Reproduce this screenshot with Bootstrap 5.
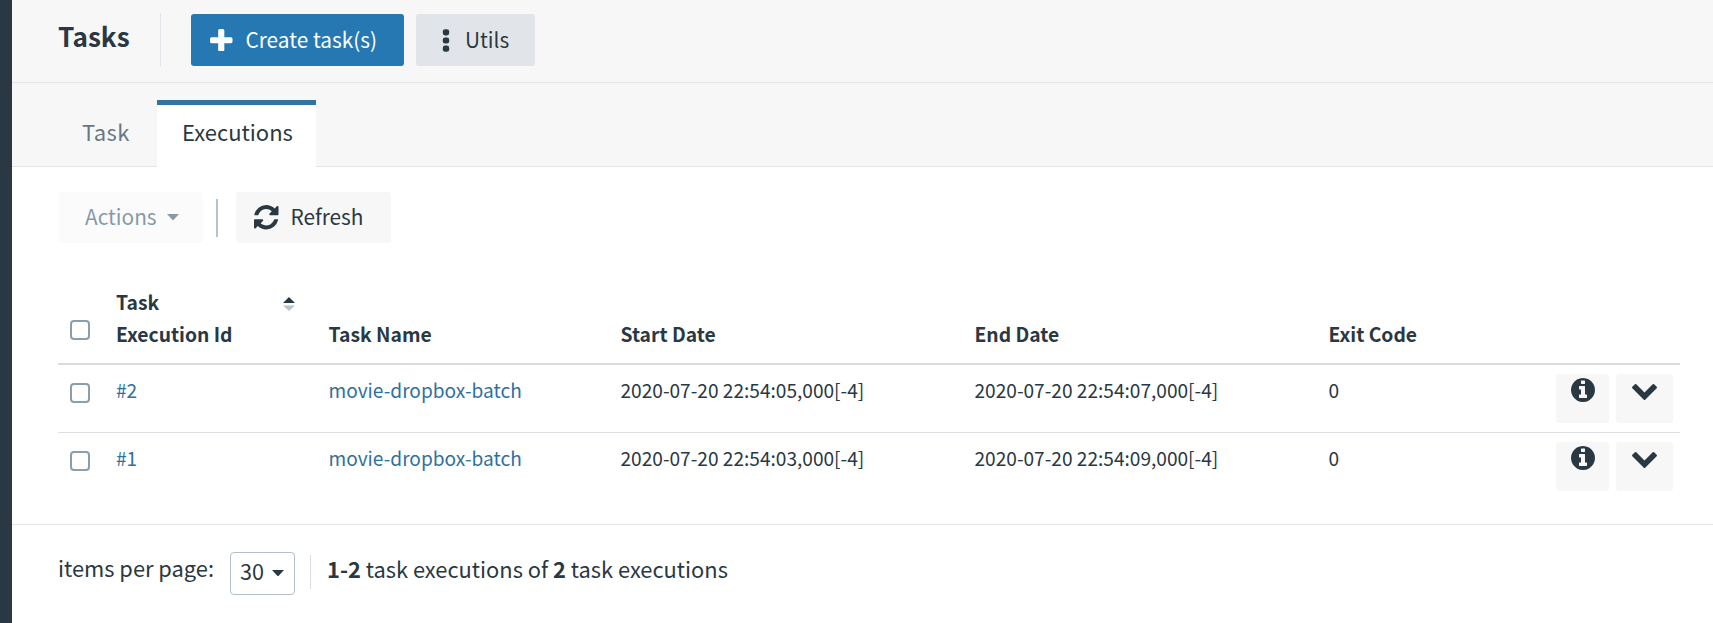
<!DOCTYPE html>
<html lang="en">
<head>
<meta charset="utf-8">
<title>Tasks</title>
<link rel="stylesheet" href="https://cdn.jsdelivr.net/npm/bootstrap@5.3.0/dist/css/bootstrap.min.css">
<script src="https://cdn.jsdelivr.net/npm/bootstrap@5.3.0/dist/js/bootstrap.bundle.min.js"></script>
<style>
  :root { --ink: #293842; --line: #e1e5e9; --blue: #2578b1; --soft: #f7f7f7; }
  body { font-family: "Noto Sans CJK SC", sans-serif; color: var(--ink); font-size: 21.85px; line-height: 32px; background: #fff; }
  svg { fill: currentColor; display: block; flex: none; }
  .side-rail { width: 12px; background: var(--ink); }
  .page-head { height: 83px; padding: 13px 0 0 46px; background: var(--soft); border-bottom: 1px solid var(--line); }
  .page-title { font-size: 26.2px; font-weight: 700; line-height: 32px; width: 102px; margin: 7px 0 0; }
  .head-rule { width: 1px; height: 53px; background: var(--line); margin-right: 30px; }
  .btn { display: flex; align-items: center; font-size: 20.8px; line-height: 30px; border: 0; border-radius: 3px; padding: 0; height: 52px; color: var(--ink); background: var(--soft); white-space: nowrap; }
  .btn span { padding-bottom: 3px; }
  .page-head .btn { margin-top: 1px; }
  .btn-create { width: 213px; padding-left: 19px; gap: 13px; background: var(--blue); color: #fff; }
  .btn-utils { width: 119px; padding-left: 26px; gap: 15px; margin-left: 12px; background: var(--line); }
  .tab-strip { height: 84px; padding: 17px 0 0 46px; background: var(--soft); border-bottom: 1px solid var(--line); }
  .nav-tabs { border: 0; }
  .nav-tabs .nav-link { height: 67px; border: 0; border-top: 5px solid transparent; border-radius: 0; color: #687782; font-size: 22px; line-height: 32px; padding: 10px 24px 0; margin: 0; }
  .nav-tabs .tab-task { width: 99px; letter-spacing: .4px; }
  .nav-tabs .nav-link.active { color: var(--ink); background: #fff; border-top-color: #32749f; padding: 10px 0 0 25px; width: 159px; }
  .tools { padding: 25px 0 0 47px; }
  .btn-actions { width: 144px; height: 51px; padding-left: 26px; gap: 10px; background: #fbfbfb; color: #8799a5; }
  .tool-rule { width: 1.5px; height: 38px; background: #b4c3cf; margin: 0 18.5px 0 13px; }
  .btn-refresh { width: 155px; height: 51px; padding-left: 18px; gap: 12px; }
  .runs { table-layout: fixed; width: 1622px; margin: 43px 0 0 46px; font-size: 19.1px; line-height: 32px; color: var(--ink); }
  .runs > :not(caption) > * > * { padding: 9px 0 0; border: 0; box-shadow: none; vertical-align: top; background: none; color: var(--ink); }
  .runs > thead > tr > th { padding: 0 0 12.5px; vertical-align: bottom; font-size: 19.3px; border-bottom: 2px solid #d6dbdf; }
  .runs > tbody > tr > td { height: 68px; }
  .runs > tbody > tr:first-child > td { height: 69px; border-bottom: 1px solid #dce0e4; }
  .runs a, .runs a:hover { color: #2f719e; text-decoration: none; }
  .runs .form-check-input { display: block; width: 20px; height: 20px; margin: 9px 0 0 12px; border: 2px solid #8c9dab; border-radius: 4px; float: none; background: #fff; }
  .runs th .form-check-input { margin: 0 0 10px 12px; }
  .runs .btn { height: 49px; align-items: flex-start; justify-content: center; padding-top: 4px; }
  .runs .btn-info-run { width: 53px; margin-right: 7px; }
  .runs .btn-more { width: 57px; padding-top: 10px; }
  .sort { margin: 11px 34px 0 0; }
  .pager { height: 99px; margin-top: 23px; padding: 27px 0 0 46px; border-top: 1px solid var(--line); }
  .per-page { width: 172px; }
  .btn-size { width: 65px; height: 43px; border: 1.5px solid #b0bfca; border-radius: 4px; background: #fff; padding: 0 0 4px 9px; gap: 8px; font-size: 21.6px; }
  .btn-size span { padding: 0; }
  .btn-size svg { margin-top: 4px; }
  .pager-rule { width: 1px; height: 34px; margin: 3px 16px 0 15px; background: #d8dee3; }
  .summary { margin-top: 1px; }
</style>
</head>
<body>
<div class="d-flex vh-100 overflow-hidden">
  <aside class="side-rail flex-shrink-0"></aside>
  <main class="flex-grow-1">
    <header class="page-head d-flex align-items-start">
      <h1 class="page-title">Tasks</h1>
      <div class="head-rule"></div>
      <button class="btn btn-create">
        <svg width="22.5" height="22.5" viewBox="192 128 1408 1408"><path d="M1600 736v192q0 40-28 68t-68 28h-416v416q0 40-28 68t-68 28h-192q-40 0-68-28t-28-68v-416h-416q-40 0-68-28t-28-68v-192q0-40 28-68t68-28h416v-416q0-40 28-68t68-28h192q40 0 68 28t28 68v416h416q40 0 68 28t28 68z"/></svg>
        <span>Create task(s)</span>
      </button>
      <button class="btn btn-utils">
        <svg width="8" height="23" viewBox="0 0 8 23"><rect x=".8" y=".2" width="6.4" height="6.2" rx="2.4"/><rect x=".8" y="8.4" width="6.4" height="6.2" rx="2.4"/><rect x=".8" y="16.6" width="6.4" height="6.2" rx="2.4"/></svg>
        <span>Utils</span>
      </button>
    </header>
    <div class="tab-strip">
      <ul class="nav nav-tabs">
        <li class="nav-item"><a class="nav-link tab-task">Task</a></li>
        <li class="nav-item"><a class="nav-link active">Executions</a></li>
      </ul>
    </div>
    <div class="tools d-flex align-items-center">
      <button class="btn btn-actions"><span>Actions</span><svg width="12" height="6.5" viewBox="0 0 12 6.5"><path d="M0 0h12L6 6.5z"/></svg></button>
      <div class="tool-rule"></div>
      <button class="btn btn-refresh">
        <svg width="24.5" height="24.5" viewBox="128 128 1536 1536"><path d="M1639 1056q0 5-1 7-64 268-268 434.5t-478 166.5q-146 0-282.5-55t-243.5-157l-129 129q-19 19-45 19t-45-19-19-45v-448q0-26 19-45t45-19h448q26 0 45 19t19 45-19 45l-137 137q71 66 161 102t187 36q134 0 250-65t186-179q11-17 53-117 8-23 30-23h192q13 0 22.5 9.5t9.5 22.5zm25-800v448q0 26-19 45t-45 19h-448q-26 0-45-19t-19-45 19-45l138-138q-148-137-349-137-134 0-250 65t-186 179q-11 17-53 117-8 23-30 23h-199q-13 0-22.5-9.5t-9.5-22.5v-7q65-268 270-434.5t480-166.5q146 0 284 55.5t245 156.500l130-129q19-19 45-19t45 19 19 45z"/></svg>
        <span>Refresh</span>
      </button>
    </div>
    <table class="table runs mb-0">
      <colgroup><col style="width:58px"><col style="width:212.5px"><col style="width:292px"><col style="width:354px"><col style="width:354px"><col style="width:227.5px"><col style="width:124px"></colgroup>
      <thead>
        <tr>
          <th><input class="form-check-input" type="checkbox" aria-label="Select all"></th>
          <th>
            <div class="d-flex justify-content-between align-items-start">
              <span>Task<br>Execution Id</span>
              <svg class="sort" width="12" height="14" viewBox="0 0 12 14"><path d="M0 6h12L6 0z"/><path d="M0 8.5h12L6 14z" fill="#b4c3cf"/></svg>
            </div>
          </th>
          <th>Task Name</th><th>Start Date</th><th>End Date</th><th>Exit Code</th><th></th>
        </tr>
      </thead>
      <tbody>
        <tr>
          <td><input class="form-check-input" type="checkbox" aria-label="Select #2"></td>
          <td><a href="#">#2</a></td>
          <td><a href="#">movie-dropbox-batch</a></td>
          <td>2020-07-20 22:54:05,000[-4]</td>
          <td>2020-07-20 22:54:07,000[-4]</td>
          <td>0</td>
          <td><div class="d-flex">
            <button class="btn btn-info-run" aria-label="Details"><svg width="24" height="24" viewBox="128 128 1536 1536"><use href="#i-info"/></svg></button>
            <button class="btn btn-more" aria-label="More"><svg width="25" height="16" viewBox="90 533 1612 1035"><use href="#i-down"/></svg></button>
          </div></td>
        </tr>
        <tr>
          <td><input class="form-check-input" type="checkbox" aria-label="Select #1"></td>
          <td><a href="#">#1</a></td>
          <td><a href="#">movie-dropbox-batch</a></td>
          <td>2020-07-20 22:54:03,000[-4]</td>
          <td>2020-07-20 22:54:09,000[-4]</td>
          <td>0</td>
          <td><div class="d-flex">
            <button class="btn btn-info-run" aria-label="Details"><svg width="24" height="24" viewBox="128 128 1536 1536"><use href="#i-info"/></svg></button>
            <button class="btn btn-more" aria-label="More"><svg width="25" height="16" viewBox="90 533 1612 1035"><use href="#i-down"/></svg></button>
          </div></td>
        </tr>
      </tbody>
    </table>
    <footer class="pager d-flex align-items-start">
      <span class="per-page">items per page:</span>
      <button class="btn btn-size"><span>30</span><svg width="12" height="6.5" viewBox="0 0 12 6.5"><path d="M0 0h12L6 6.5z"/></svg></button>
      <div class="pager-rule"></div>
      <span class="summary"><b>1-2</b> task executions of <b>2</b> task executions</span>
    </footer>
  </main>
</div>
<svg class="d-none">
  <path id="i-info" d="M1152 1376v-160q0-14-9-23t-23-9h-96v-512q0-14-9-23t-23-9h-320q-14 0-23 9t-9 23v160q0 14 9 23t23 9h96v320h-96q-14 0-23 9t-9 23v160q0 14 9 23t23 9h448q14 0 23-9t9-23zm-128-896v-160q0-14-9-23t-23-9h-192q-14 0-23 9t-9 23v160q0 14 9 23t23 9h192q14 0 23-9t9-23zm640 416q0 209-103 385.5t-279.5 279.5-385.5 103-385.5-103-279.5-279.5-103-385.5 103-385.5 279.5-279.5 385.5-103 385.5 103 279.5 279.5 103 385.5z"/>
  <path id="i-down" d="M1683 808l-742 741q-19 19-45 19t-45-19l-742-741q-19-19-19-45.5t19-45.5l166-165q19-19 45-19t45 19l531 531 531-531q19-19 45-19t45 19l166 165q19 19 19 45.5t-19 45.5z"/>
</svg>
</body>
</html>
